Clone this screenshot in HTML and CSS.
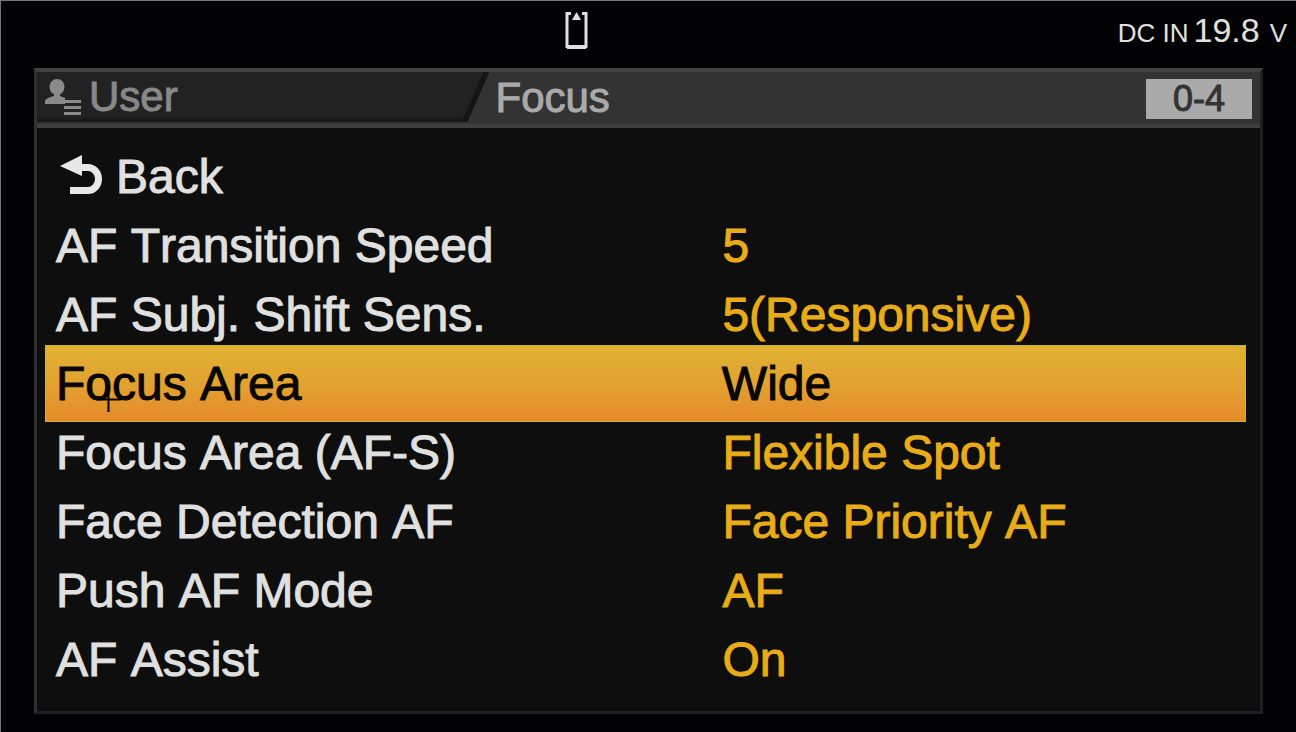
FILE: index.html
```html
<!DOCTYPE html>
<html lang="en">
<head>
    <meta charset="UTF-8">
    <meta name="viewport" content="width=device-width, initial-scale=1.0">
    <title>Focus</title>
    <link rel="stylesheet" href="styles.css">
</head>
<body>
  <header class="status-bar">
    <svg class="media-icon" width="24" height="40" viewBox="0 0 24 40" aria-hidden="true">
      <path d="M6 2.500H2V35.500H21V2.500H17" fill="none" stroke="#e0e0e0" stroke-width="3"/>
      <path d="M2 36H21" stroke="#e0e0e0" stroke-width="4"/>
      <path d="M11.500 1L16 9H7Z" fill="#e0e0e0"/>
    </svg>
    <div class="power">
      <span>DC IN</span>
      <span class="voltage">19.8</span>
      <span class="unit">V</span>
    </div>
  </header>

  <main class="panel">
    <div class="panel-header">
      <div class="tab-user">
        <svg width="36" height="38" viewBox="0 0 36 38" aria-hidden="true">
          <ellipse cx="12" cy="9" rx="7.500" ry="8" fill="#8a8a8a"/>
          <path d="M9 15H15V18L20 20V26H0V23Q1 20 9 18Z" fill="#8a8a8a"/>
          <path d="M19 23.500H36M19 29.500H36M19 35.500H36" stroke="#8a8a8a" stroke-width="3"/>
        </svg>
        <span>User</span>
      </div>
      <h1 class="title">Focus</h1>
      <span class="page-number">0-4</span>
    </div>

    <div class="menu">
      <button class="row back">
        <svg width="44" height="44" viewBox="0 0 44 44" aria-hidden="true">
          <path d="M19 12.500H28A10.500 11.500 0 0 1 28 35.500H10" fill="none" stroke="#e8e8e8" stroke-width="7"/>
          <path d="M0 11L22 0V21Z" fill="#e8e8e8"/>
        </svg>
        <span>Back</span>
      </button>
      <button class="row"><span>AF Transition Speed</span><span class="value">5</span></button>
      <button class="row"><span>AF Subj. Shift Sens.</span><span class="value">5(Responsive)</span></button>
      <button class="row selected">
        <span>Focus Area</span><span class="value">Wide</span>
        <svg class="cursor" width="25" height="25" viewBox="0 0 25 25" aria-hidden="true">
          <path d="M0 12.500H25M12.500 0V25" stroke="#000" stroke-width="2"/>
        </svg>
      </button>
      <button class="row"><span>Focus Area (AF-S)</span><span class="value">Flexible Spot</span></button>
      <button class="row"><span>Face Detection AF</span><span class="value">Face Priority AF</span></button>
      <button class="row"><span>Push AF Mode</span><span class="value">AF</span></button>
      <button class="row"><span>AF Assist</span><span class="value">On</span></button>
    </div>
  </main>
</body>
</html>
```

FILE: styles.css
```css
* {
  box-sizing: border-box;
}
body {
  margin: 0;
  min-height: 100vh;
  padding: 0 33px 18px;
  display: flex;
  flex-direction: column;
  background: #020204;
  border-top: 1px solid #777;
  border-left: 1px solid #777;
  color: #e0e0e0;
  font-family: "Liberation Sans", Arial, sans-serif;
}

/* status bar */
.status-bar {
  display: grid;
  grid-template-columns: 1fr auto 1fr;
  align-items: center;
  height: 67px;
  padding-bottom: 8px;
  margin-right: -24px;
}
.media-icon {
  grid-column: 2;
  margin-right: 168px;
}
.power {
  display: flex;
  justify-content: flex-end;
  align-items: baseline;
  gap: 5px;
  font-size: 26px;
}
.voltage {
  font-size: 34px;
}
.unit {
  margin-left: 5px;
}

/* panel */
.panel {
  flex: 1;
  display: flex;
  flex-direction: column;
  background: #0e0e0e;
  border: 3px solid #202020;
  border-top: 4px solid #424242;
  border-left-color: #303030;
}
.panel-header {
  display: flex;
  align-items: flex-start;
  height: 56px;
  background: #333;
  border-bottom: 4px solid #3e3e3e;
  font-size: 42px;
  line-height: 52px;
  -webkit-text-stroke: 1px;
}
.tab-user {
  position: relative;
  flex: 0 0 37%;
  display: flex;
  align-items: center;
  gap: 8px;
  height: 50px;
  padding-left: 8px;
  background: linear-gradient(#222 88%, #141414);
  clip-path: polygon(0 0, 100% 0, calc(100% - 22px) 100%, 0 100%);
  color: #888;
}
/* dark shade along the slanted edge */
.tab-user::after {
  content: "";
  position: absolute;
  top: 0;
  right: 0;
  width: 28px;
  height: 100%;
  background: #151515;
  clip-path: polygon(22px 0, 100% 0, 6px 100%, 0 100%);
}
.title {
  margin: 0 auto 0 6px;
  font-size: 42px;
  font-weight: normal;
  color: #aaa;
}
.page-number {
  width: 106px;
  margin: 7px 8px 0 0;
  background: #aaa;
  color: #333;
  font-size: 36px;
  line-height: 40px;
  text-align: center;
}

/* menu rows */
.menu {
  padding: 14px 14px 17px 8px;
}
.row {
  display: grid;
  grid-template-columns: 56fr 44fr;
  align-items: center;
  width: 100%;
  height: 69px;
  padding: 0 0 0 11px;
  border: none;
  background: none;
  color: #e0e0e0;
  font-family: inherit;
  font-size: 48px;
  font-kerning: none;
  -webkit-text-stroke: 1px;
  text-align: left;
  white-space: nowrap;
  cursor: pointer;
}
.value {
  color: #e8ac18;
}
.back {
  display: flex;
  gap: 12px;
  padding-left: 15px;
}
.selected {
  position: relative;
  height: 77px;
  margin: -4px 0;
  border: 1px solid #c9b428;
  padding-left: 10px;
  background: linear-gradient(#dfb233, #e2a030 55%, #e68a2a);
}
.selected,
.selected .value {
  color: #0a0602;
}
.cursor {
  position: absolute;
  left: 50px;
  top: 41px;
}
```
